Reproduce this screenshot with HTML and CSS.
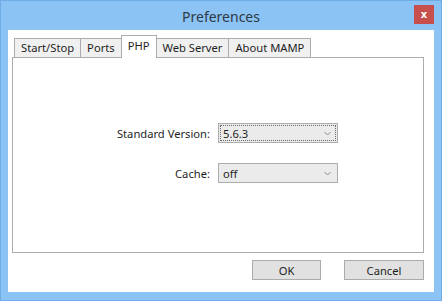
FILE: index.html
```html
<!DOCTYPE html>
<html lang="en">
<head>
  <meta charset="UTF-8">
  <title>Preferences</title>
  <link rel="stylesheet" href="styles.css">
</head>
<body>
  <div class="window">
    <div class="titlebar">
      <span></span>
      <div class="title">Preferences</div>
      <button class="close">x</button>
    </div>

    <div class="client">
      <div class="tabs">
        <div class="tab">Start/Stop</div>
        <div class="tab">Ports</div>
        <div class="tab active">PHP</div>
        <div class="tab">Web Server</div>
        <div class="tab">About MAMP</div>
      </div>

      <div class="panel">
        <div class="form">
          <label>Standard Version:</label>
          <div class="select focused">
            <span>5.6.3</span>
            <svg width="7" height="5" viewBox="0 0 7 5"><polyline points="0.5,1 3.5,4 6.5,1" fill="none" stroke="#8a8a8a" stroke-width="1"/></svg>
          </div>
          <label>Cache:</label>
          <div class="select">
            <span>off</span>
            <svg width="7" height="5" viewBox="0 0 7 5"><polyline points="0.5,1 3.5,4 6.5,1" fill="none" stroke="#8a8a8a" stroke-width="1"/></svg>
          </div>
        </div>
      </div>

      <div class="footer">
        <button class="btn ok">OK</button>
        <button class="btn cancel">Cancel</button>
      </div>
    </div>
  </div>
</body>
</html>
```

FILE: styles.css
```css
body {
  margin: 0;
  font-family: "Noto Sans", "Open Sans", sans-serif;
  color: #1e1e1e;
}
.window {
  width: 442px;
  height: 301px;
  box-sizing: border-box;
  background-color: #8bc3f5;
  border: 1px solid #6fade6;
  display: flex;
  flex-direction: column;
}
.titlebar {
  height: 29px;
  display: grid;
  grid-template-columns: 1fr auto 1fr;
  align-items: center;
}
.title {
  font-size: 14px;
  color: #2e3a44;
  padding-top: 1px;
}
.close {
  justify-self: end;
  width: 20px;
  height: 19px;
  margin-right: 7px;
  margin-top: -3px;
  border: none;
  padding: 0;
  background-color: #c7504c;
  color: white;
  font-family: "DejaVu Sans", sans-serif;
  font-weight: bold;
  font-size: 10px;
  line-height: 17px;
}
.client {
  flex: 1;
  margin: 0 7px 8px 7px;
  padding: 5px 10px 0 4px;
  background-color: white;
  display: flex;
  flex-direction: column;
}
.tabs {
  display: flex;
  align-items: flex-end;
  height: 22px;
  padding-left: 2px;
  position: relative;
  z-index: 1;
}
.tab {
  height: 19px;
  box-sizing: border-box;
  padding: 0 6px;
  border: 1px solid #acacac;
  border-bottom: none;
  margin-right: -1px;
  background-color: #f0f0f0;
  font-size: 11.2px;
  line-height: 18px;
}
.tab.active {
  height: 23px;
  margin-bottom: -1px;
  background-color: white;
  line-height: 19px;
  padding-bottom: 3px;
}
.panel {
  height: 196px;
  box-sizing: border-box;
  border: 1px solid #acacac;
  padding-top: 65px;
}
.form {
  display: grid;
  grid-template-columns: 197px 120px;
  column-gap: 8px;
  row-gap: 20px;
  align-items: center;
  font-size: 11.2px;
}
.form label {
  text-align: right;
}
.select {
  height: 20px;
  box-sizing: border-box;
  border: 1px solid #acacac;
  background-color: #ebebeb;
  display: flex;
  align-items: center;
  justify-content: space-between;
  padding: 0 6px 0 4px;
  position: relative;
}
.select.focused::after {
  content: '';
  position: absolute;
  inset: 1px;
  border: 1px dotted #6a6a6a;
}
.footer {
  display: flex;
  justify-content: flex-end;
  gap: 23px;
  padding-top: 7px;
}
.btn {
  height: 20px;
  border: 1px solid #acacac;
  background-color: #e1e1e1;
  font-family: "Noto Sans", "Open Sans", sans-serif;
  font-size: 11.2px;
  color: #1e1e1e;
  padding: 0;
}
.ok {
  width: 69px;
}
.cancel {
  width: 80px;
}
```
